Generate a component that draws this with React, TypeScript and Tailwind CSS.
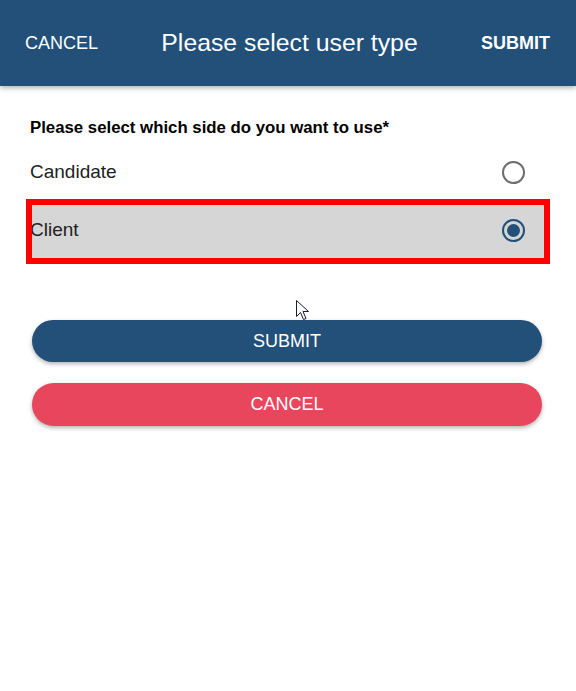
import React from "react";

function Radio({ checked }: { checked: boolean }) {
  return checked ? (
    <div className="w-[23px] h-[23px] rounded-full border-2 border-[#225079] flex items-center justify-center">
      <div className="w-[13px] h-[13px] rounded-full bg-[#225079]" />
    </div>
  ) : (
    <div className="w-[23px] h-[23px] rounded-full border-2 border-[#6e6e6e] bg-white" />
  );
}

export default function App() {
  return (
    <div
      className="relative w-[576px] h-[691px] bg-white overflow-hidden"
      style={{ fontFamily: '"Liberation Sans", Arial, sans-serif' }}
    >
      <div className="relative z-10 h-[86px] bg-[#225079] shadow-[0_2px_5px_rgba(0,0,0,0.3)] flex items-center justify-between pl-[25px] pr-[26px] text-white">
        <span className="text-[18px] leading-none">CANCEL</span>
        <span className="text-[24.8px] leading-none">Please select user type</span>
        <span className="text-[18px] font-bold leading-none">SUBMIT</span>
      </div>

      <div className="pt-[32px]">
        <div className="pl-[30px] text-[16.8px] font-bold text-black leading-[20px]">
          Please select which side do you want to use*
        </div>
        <div className="mx-[26px] mt-[5px] h-[56px] flex items-center justify-between pl-[4px] pr-[25px]">
          <span className="text-[19px] text-[#222] mt-[2px]">Candidate</span>
          <div className="mt-[2px]">
            <Radio checked={false} />
          </div>
        </div>
        <div className="relative mx-[26px] h-[65px] bg-[#d6d6d6] flex items-center justify-between pl-[4px] pr-[25px]">
          <span className="text-[19px] text-[#222] -mt-[3px]">Client</span>
          <div className="-mt-[3px]">
            <Radio checked={true} />
          </div>
          <div className="absolute inset-0 border-[6px] border-[#ff0000] pointer-events-none" />
        </div>

        <div className="ml-[32px] w-[510px] mt-[56px] flex flex-col gap-[21px]">
          <button className="h-[42px] rounded-full bg-[#225079] text-white text-[18px] shadow-[0_2px_4px_rgba(0,0,0,0.3)]">
            SUBMIT
          </button>
          <button className="h-[43px] rounded-full bg-[#e8465c] text-white text-[18px] shadow-[0_2px_4px_rgba(0,0,0,0.3)]">
            CANCEL
          </button>
        </div>
      </div>

      <svg
        className="absolute left-[296px] top-[300px]"
        width="14"
        height="21"
        viewBox="0 0 14 21"
      >
        <path
          d="M0.5 0.5 L0.5 16.5 L4.5 12.5 L7.5 19.5 L10 18.5 L7 11.5 L12.5 11.5 Z"
          fill="white"
          stroke="#1a1a3a"
          strokeWidth="1"
          strokeLinejoin="round"
        />
      </svg>
    </div>
  );
}
